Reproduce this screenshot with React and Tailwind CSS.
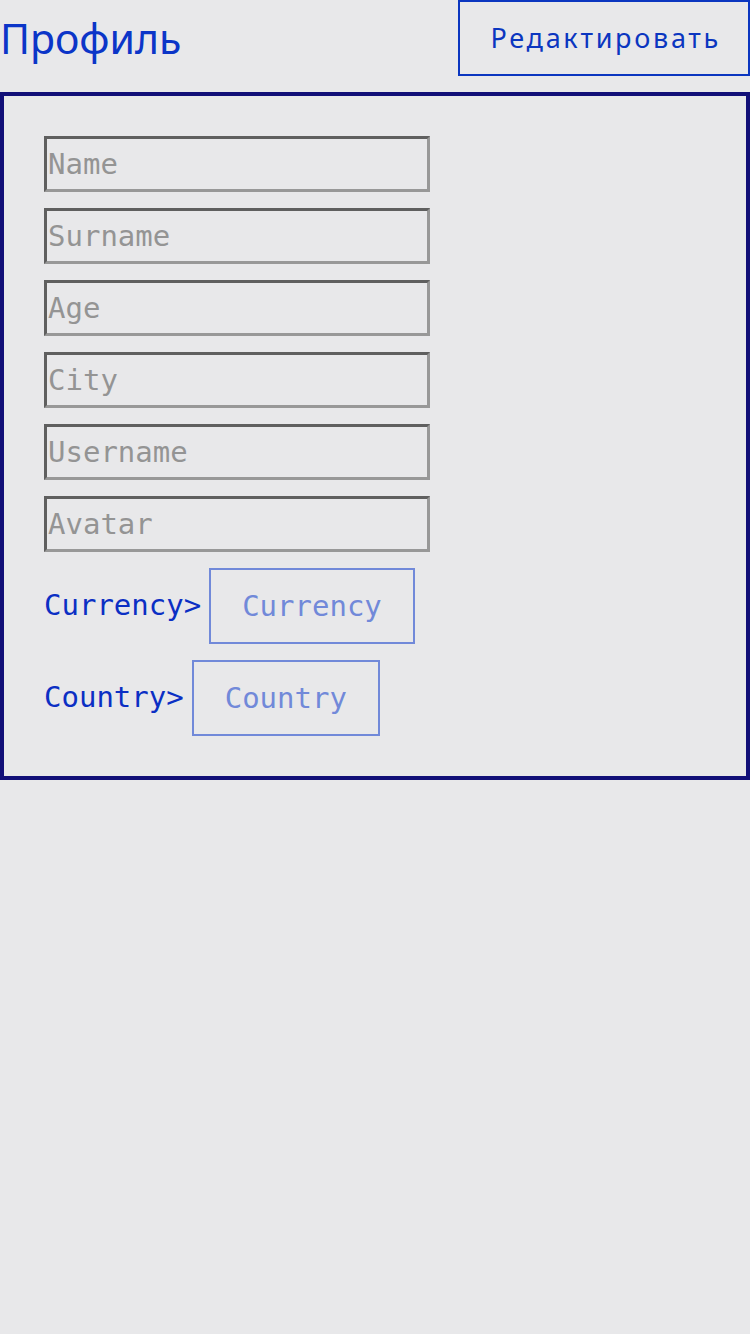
const fields = ["Name", "Surname", "Age", "City", "Username", "Avatar"];

const mono = "font-['DejaVu_Sans_Mono',monospace]";

function SelectRow({ label }) {
    return (
        <div className="flex items-center gap-2">
            <span className={`${mono} text-[29px] text-[#0b2fc4]`}>{label}&gt;</span>
            <button className={`${mono} text-[29px] border-2 border-[#7189d9] text-[#7189d9] px-[31px] py-[19px] leading-[34px]`}>
                {label}
            </button>
        </div>
    );
}

export default function App() {
    return (
        <div className="min-h-screen bg-[#e8e8ea]">
            {/* Header */}
            <div className="flex items-center justify-between mb-4">
                <h1 className="font-['Noto_Sans',sans-serif] text-[41px] text-[#0b35c8] leading-none">Профиль</h1>
                <button className="h-[76px] pl-[30px] pr-[27px] border-2 border-[#0b36c0] font-['Noto_Sans',sans-serif] text-[27px] tracking-[0.1em] text-[#0b36c0]">
                    Редактировать
                </button>
            </div>

            {/* Profile card */}
            <div className="border-4 border-[#110f78] p-10 flex flex-col gap-4">
                {fields.map((f) => (
                    <input
                        key={f}
                        placeholder={f}
                        className={`${mono} w-[386px] h-[56px] border-[3px] border-t-[#5f5f5f] border-l-[#5f5f5f] border-b-[#989898] border-r-[#989898] px-px text-[29px] placeholder:text-[#949494] outline-none`}
                    />
                ))}
                <SelectRow label="Currency" />
                <SelectRow label="Country" />
            </div>
        </div>
    );
}
